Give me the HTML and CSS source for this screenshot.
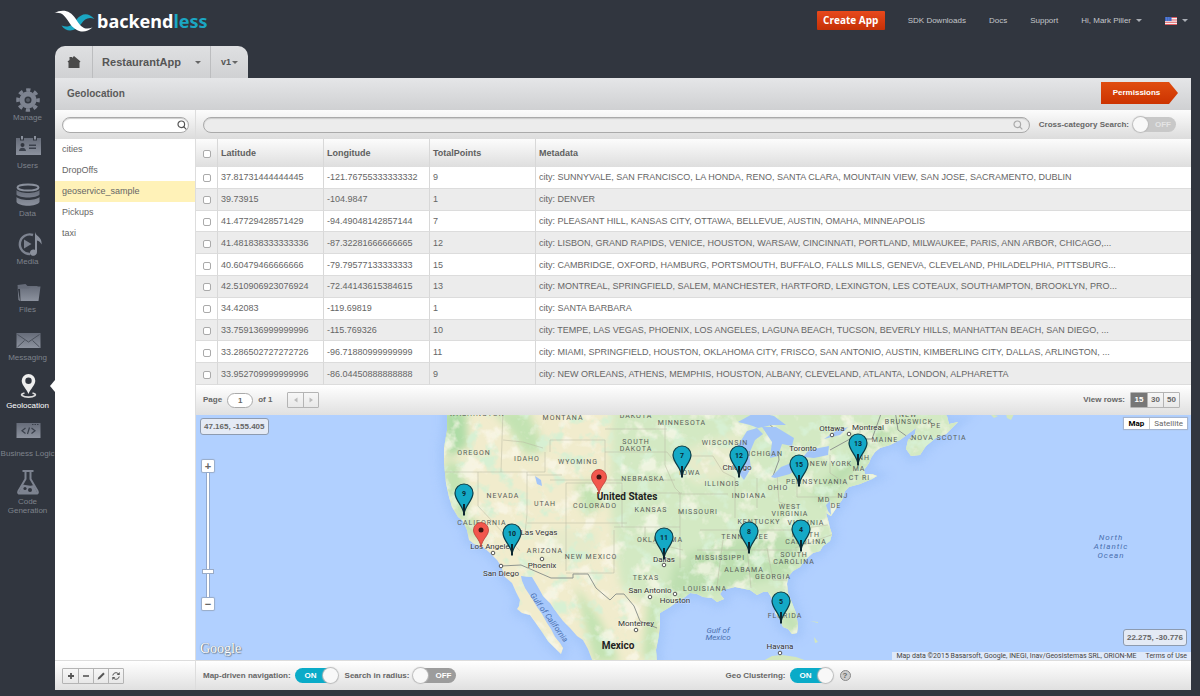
FILE: index.html
```html
<!DOCTYPE html>
<html lang="en">
<head>
<meta charset="utf-8">
<title>Backendless - Geolocation</title>
<link rel="stylesheet" href="styles.css">
</head>
<body>
<header class="topbar">
  <a class="logo" href="#" aria-label="backendless">
    <svg class="logo-mark" viewBox="0 0 40 22" aria-hidden="true">
      <path d="M7 15.500C14 18.500 18 15 22 9.500C27 3 34 2 40 9C34 6.500 30 9 27 13.500C21 22 12 23 7 15.500Z" fill="#1ba6c2"/>
      <path d="M0 3C8 -1.500 16 .5 21 8.500C26 17 30 20.500 38 17.500C30 24.500 21 22 15 13C10 5 7 2 0 3Z" fill="#fff"/>
    </svg>
    <span class="logo-text">backend<span class="logo-accent">less</span></span>
  </a>
  <nav class="topnav">
    <button class="create" type="button">Create App</button>
    <a href="#">SDK Downloads</a>
    <a href="#">Docs</a>
    <a href="#">Support</a>
    <button class="menu" type="button">Hi, Mark Piller <i class="caret"></i></button>
    <button class="menu flag" type="button" aria-label="Language">
      <svg width="12" height="8" viewBox="0 0 11 8" preserveAspectRatio="none" aria-hidden="true"><path fill="#f4f0f3" d="M0 0h11v8H0z"/><path stroke="#e05a5e" d="M0 .5h11M0 3h11M0 5.300h11M0 7.500h11"/><path fill="#3d66c4" d="M0 0h6v4H0z"/><path d="M1 1h4M1 3h4" stroke="#9db8ee" stroke-dasharray="1 1" stroke-width=".6"/></svg>
      <i class="caret"></i>
    </button>
  </nav>
</header>

<div class="layout">
  <nav class="side">
    <a href="#"><svg viewBox="0 0 30 30" aria-hidden="true"><g fill="none" stroke="#7d8390"><circle cx="15" cy="18" r="6" stroke-width="5"/><circle cx="15" cy="18" r="10" stroke-width="3.600" stroke-dasharray="4.200 3.654" stroke-dashoffset="2.100"/></g><circle cx="15" cy="18" r="2" fill="#555b66"/></svg>Manage</a>
    <a href="#"><svg viewBox="0 0 30 30" aria-hidden="true"><path fill="url(#ig)" d="M3 8h4v2.500h4V8h9v2.500h4V8h4v17H3z"/><path d="M9 6v3.500M22 6v3.500" stroke="#8a909c" stroke-width="2"/><circle cx="9.500" cy="15" r="2" fill="#31363f"/><path d="M6 21c0-4.500 7-4.500 7 0zM16 14.500h7V16h-7zM16 17.500h7V19h-7z" fill="#3b414c"/></svg>Users</a>
    <a href="#"><svg viewBox="0 0 30 30" aria-hidden="true"><ellipse cx="15" cy="9.500" rx="10.500" ry="3" fill="none" stroke="#8a909c" stroke-width="2"/><path fill="url(#ig)" d="M3.500 12c4 4 19 4 23 0v4.500c-3 4-20 4-23 0zM3.500 19c4 4 19 4 23 0v5c-3 5-20 5-23 0z"/></svg>Data</a>
    <a href="#"><svg viewBox="0 0 30 30" aria-hidden="true"><path d="M20 9A9.800 9.800 0 1 0 17 28" fill="none" stroke="#7d8390" stroke-width="2.400"/><path d="M11 13.500l7.500 4.500-7.500 4.500z" fill="#7d8390"/><path d="M22 6c1 4.500 7.500 5 6.500 12.500-1-2.500-2.500-3.500-4.500-4V26c0 5-7.500 5-7 .5.500-3 3-3.500 5-2.500z" fill="#8a909c"/></svg>Media</a>
    <a href="#"><svg viewBox="0 0 30 30" aria-hidden="true"><path fill="#656b78" d="M4.500 11l8-1 2 2h10v3H5z"/><path fill="url(#ig)" d="M7 14.500h9l2-2h9.500L25.500 27H7.500zM4.500 12l2.500 15-1.500-1z"/></svg>Files</a>
    <a href="#"><svg viewBox="0 0 30 30" aria-hidden="true"><path fill="url(#ig)" d="M3.500 11h24v15h-24z"/><path d="M4.500 12.500l11 7.500 11-7.500M4.500 25l7-6.500M26.500 25l-7-6.500" fill="none" stroke="#4b515c"/></svg>Messaging</a>
    <a href="#" class="active" aria-current="page"><svg viewBox="0 0 30 30" aria-hidden="true"><path fill="#eee" fill-rule="evenodd" d="M15.500 4a6.800 6.800 0 0 1 6.800 6.800c0 4.200-4.800 8.200-6.800 13.200-2-5-6.800-9-6.800-13.200A6.800 6.800 0 0 1 15.500 4zm0 3.600a3.200 3.200 0 1 0 0 6.400 3.200 3.200 0 0 0 0-6.400z"/><path d="M11.500 23c-6 1.500-1.500 4.200 4 4.200s10-2.700 4-4.200" fill="none" stroke="#ddd" stroke-width="1.800"/></svg>Geolocation</a>
    <a href="#"><svg viewBox="0 0 30 30" aria-hidden="true"><path fill="url(#ig)" d="M3.500 5h24v15h-24z"/><path d="M19 6.500h7" stroke="#3a404b" stroke-dasharray="1.500 1"/><path d="M12.500 10L9 12.800l3.500 2.700M18.500 10l3.500 2.800-3.500 2.700M16.500 9.500l-2 6.500" fill="none" stroke="#3a404b" stroke-width="1.200"/></svg>Business Logic</a>
    <a href="#"><svg viewBox="0 0 30 30" aria-hidden="true"><path d="M9.500 5h11M12.500 5v8l-7 12c-1 2 0 2.500 1.500 2.500h16c1.500 0 2.500-.5 1.500-2.500l-7-12V5" fill="none" stroke="#7d8390" stroke-width="2"/><path fill="#7d8390" d="M9.500 19c3-1 7 2 11 0l4 8h-19z"/><circle cx="12" cy="22.500" r="1.600" fill="#31363f"/><circle cx="17" cy="24" r="2" fill="#31363f"/></svg>Code Generation</a>
    <svg class="defs" aria-hidden="true"><defs><linearGradient id="ig" x2="0" y2="1"><stop stop-color="#666c79"/><stop offset="1" stop-color="#8c929e"/></linearGradient></defs></svg>
  </nav>

  <div class="workspace">
    <div class="tabs">
      <button class="tab home" type="button" aria-label="Home"><svg width="14" height="14" viewBox="0 0 14 14" aria-hidden="true"><path d="M7 1l6.500 5.500-1 1V13h-11V7.500l-1-1L2.500 5V2H5v1z" fill="#4a4a4a"/></svg></button>
      <button class="tab app" type="button">RestaurantApp <i class="caret dark"></i></button>
      <button class="tab version" type="button">v1<i class="caret dark"></i></button>
    </div>
    <div class="titlebar">
      <h1>Geolocation</h1>
      <button class="permissions" type="button"><span>Permissions</span></button>
    </div>
    <div class="panes">
      <aside class="cats">
        <div class="bar">
          <label class="search"><input type="text" aria-label="Filter categories"><svg viewBox="0 0 10 10" aria-hidden="true"><circle cx="4.300" cy="4.300" r="3.300"/><path d="M6.700 6.700L9.300 9.300"/></svg></label>
        </div>
        <ul>
          <li><a href="#">cities</a></li>
          <li><a href="#">DropOffs</a></li>
          <li class="current"><a href="#">geoservice_sample</a></li>
          <li><a href="#">Pickups</a></li>
          <li><a href="#">taxi</a></li>
        </ul>
        <div class="footbar">
          <div class="group">
            <button type="button" aria-label="Add"><svg viewBox="0 0 10 10" aria-hidden="true"><path d="M5 2v6M2 5h6" stroke-width="1.800"/></svg></button>
            <button type="button" aria-label="Remove"><svg viewBox="0 0 10 10" aria-hidden="true"><path d="M2 5h6" stroke-width="1.600"/></svg></button>
            <button type="button" aria-label="Edit"><svg viewBox="0 0 10 10" aria-hidden="true"><path d="M3 7.200L8 2.200" stroke-width="2"/><path d="M1.500 8.700l1-2.500 1.500 1.500z" fill="#555" stroke="none"/></svg></button>
            <button type="button" aria-label="Refresh"><svg viewBox="0 0 10 10" aria-hidden="true"><path d="M1.800 4.500a3.200 3.200 0 0 1 5.600-1.700M8.200 5.500a3.200 3.200 0 0 1-5.600 1.700"/><path d="M8.700 1v3h-3zM1.300 9V6h3z" fill="#555" stroke="none"/></svg></button>
          </div>
        </div>
      </aside>

      <main class="main">
        <div class="bar">
          <label class="search wide"><input type="text" aria-label="Search points"><svg viewBox="0 0 10 10" aria-hidden="true"><circle cx="4.300" cy="4.300" r="3.300"/><path d="M6.700 6.700L9.300 9.300"/></svg></label>
          <label class="switch faded">Cross-category Search: <input type="checkbox"><span class="track">OFF</span></label>
        </div>

        <table>
          <thead><tr><th class="c-check"><input type="checkbox" aria-label="Select all"></th><th class="c-num">Latitude</th><th class="c-num">Longitude</th><th class="c-num">TotalPoints</th><th>Metadata</th></tr></thead>
          <tbody>
            <tr><td><input type="checkbox" aria-label="Select row 1"></td><td>37.81731444444445</td><td>-121.76755333333332</td><td>9</td><td>city: SUNNYVALE, SAN FRANCISCO, LA HONDA, RENO, SANTA CLARA, MOUNTAIN VIEW, SAN JOSE, SACRAMENTO, DUBLIN</td></tr>
            <tr><td><input type="checkbox" aria-label="Select row 2"></td><td>39.73915</td><td>-104.9847</td><td>1</td><td>city: DENVER</td></tr>
            <tr><td><input type="checkbox" aria-label="Select row 3"></td><td>41.47729428571429</td><td>-94.49048142857144</td><td>7</td><td>city: PLEASANT HILL, KANSAS CITY, OTTAWA, BELLEVUE, AUSTIN, OMAHA, MINNEAPOLIS</td></tr>
            <tr><td><input type="checkbox" aria-label="Select row 4"></td><td>41.481838333333336</td><td>-87.32281666666665</td><td>12</td><td>city: LISBON, GRAND RAPIDS, VENICE, HOUSTON, WARSAW, CINCINNATI, PORTLAND, MILWAUKEE, PARIS, ANN ARBOR, CHICAGO,...</td></tr>
            <tr><td><input type="checkbox" aria-label="Select row 5"></td><td>40.60479466666666</td><td>-79.79577133333333</td><td>15</td><td>city: CAMBRIDGE, OXFORD, HAMBURG, PORTSMOUTH, BUFFALO, FALLS MILLS, GENEVA, CLEVELAND, PHILADELPHIA, PITTSBURG...</td></tr>
            <tr><td><input type="checkbox" aria-label="Select row 6"></td><td>42.510906923076924</td><td>-72.44143615384615</td><td>13</td><td>city: MONTREAL, SPRINGFIELD, SALEM, MANCHESTER, HARTFORD, LEXINGTON, LES COTEAUX, SOUTHAMPTON, BROOKLYN, PRO...</td></tr>
            <tr><td><input type="checkbox" aria-label="Select row 7"></td><td>34.42083</td><td>-119.69819</td><td>1</td><td>city: SANTA BARBARA</td></tr>
            <tr><td><input type="checkbox" aria-label="Select row 8"></td><td>33.759136999999996</td><td>-115.769326</td><td>10</td><td>city: TEMPE, LAS VEGAS, PHOENIX, LOS ANGELES, LAGUNA BEACH, TUCSON, BEVERLY HILLS, MANHATTAN BEACH, SAN DIEGO, ...</td></tr>
            <tr><td><input type="checkbox" aria-label="Select row 9"></td><td>33.286502727272726</td><td>-96.71880999999999</td><td>11</td><td>city: MIAMI, SPRINGFIELD, HOUSTON, OKLAHOMA CITY, FRISCO, SAN ANTONIO, AUSTIN, KIMBERLING CITY, DALLAS, ARLINGTON, ...</td></tr>
            <tr><td><input type="checkbox" aria-label="Select row 10"></td><td>33.952709999999996</td><td>-86.04450888888888</td><td>9</td><td>city: NEW ORLEANS, ATHENS, MEMPHIS, HOUSTON, ALBANY, CLEVELAND, ATLANTA, LONDON, ALPHARETTA</td></tr>
          </tbody>
        </table>

        <div class="pager">
          <label class="page">Page <input type="text" value="1"></label>
          <span>of 1</span>
          <div class="group off">
            <button type="button" disabled aria-label="Previous page"><svg viewBox="0 0 10 10" aria-hidden="true"><path d="M6.500 2.500v5L3 5z"/></svg></button>
            <button type="button" disabled aria-label="Next page"><svg viewBox="0 0 10 10" aria-hidden="true"><path d="M3.500 2.500v5L7 5z"/></svg></button>
          </div>
          <span class="push">View rows:</span>
          <div class="group rows">
            <button type="button" class="on" aria-pressed="true">15</button>
            <button type="button">30</button>
            <button type="button">50</button>
          </div>
        </div>

        <section class="map" aria-label="Map">
          <svg class="canvas" viewBox="196 415 995 245" preserveAspectRatio="xMidYMid slice">
            <defs>
              <filter id="soft" x="-30%" y="-30%" width="160%" height="160%"><feGaussianBlur stdDeviation="4"/></filter>
              <filter id="mottle" x="0" y="0" width="100%" height="100%"><feTurbulence type="fractalNoise" baseFrequency=".06" numOctaves="4" seed="7"/><feColorMatrix values="0 0 0 0 .68  0 0 0 0 .87  0 0 0 0 .65  5 0 0 0 -2.700"/></filter>
              <filter id="sand" x="0" y="0" width="100%" height="100%"><feTurbulence type="fractalNoise" baseFrequency=".05" numOctaves="4" seed="21"/><feColorMatrix values="0 0 0 0 .96  0 0 0 0 .94  0 0 0 0 .83  5 0 0 0 -2.700"/></filter>
              <path id="land" d="M447 410L447 430 444 448 444 463 446 483 449 497 452 507 458 517 463 521 467 530 469 540 474 544 483 547 490 553 497 560 501 566 505 577 512 583 516 592 520 600 519 606 517 609 522 613 530 615 535 622 542 632 548 641 555 648 561 654 563 648 560 643 555 637 551 629 547 623 542 614 537 607 531 597 525 588 522 581 521 576 532 577 535 582 538 587 543 596 550 603 557 613 563 621 570 628 577 636 583 640 588 649 593 662 657 662 656 650 658 640 660 627 660 613 670 607 678 601 685 597 690 593 697 594 703 597 712 598 717 602 724 599 720 594 723 590 735 587 750 590 757 595 763 592 768 592 773 600 776 606 775 613 780 620 783 627 788 629 792 634 797 633 798 625 796 613 792 603 788 593 787 584 788 577 793 571 800 567 806 559 813 553 820 551 823 546 830 541 832 534 830 528 828 520 826 513 831 516 837 507 842 500 845 491 849 487 860 484 872 479 877 476 872 474 865 474 864 470 869 463 871 458 875 452 880 448 890 445 900 440 908 434 916 428 915 434 908 440 906 449 911 456 920 455 926 446 937 437 946 434 958 422 949 424 947 416 940 410Z"/>
              <clipPath id="inland"><use href="#land"/></clipPath>
              <g id="cluster"><path d="M0 22C0 13-9 8-9 0a9 9 0 0 1 18 0C9 8 0 13 0 22z" fill="#14a9c6" stroke="#0a3c48" stroke-width="1.200"/><path d="M0 11v11.500" stroke="#0c2630" stroke-width="2"/></g>
              <g id="point"><path d="M0 17C-1 9-7.500 6-7.500 0a7.500 7.500 0 0 1 15 0C7.500 6 1 9 0 17z" fill="#f2574d" stroke="#b63e36" stroke-width=".8"/><circle r="2.500" fill="#401412"/></g>
            </defs>
            <path fill="#b1d0ff" d="M-2000 415h6000v245H-2000z"/>
            <use href="#land" fill="#8fb6f2" stroke="#a3c5fa" stroke-width="12" filter="url(#soft)" opacity=".8"/>
            <use href="#land" fill="#f1eccd"/>
            <g clip-path="url(#inland)">
              <g filter="url(#soft)">
                <path fill="#d3e9c3" d="M612 405h353v240H700l-80-60-10-80z"/>
                <path fill="#aedca6" d="M440 410h26l2 36-20 12z"/>
                <path fill="#c3e3b2" d="M445 460l18 5 5 45 18 30-20-5-24-50zM492 410h36l18 40-20 5-20-30zM575 485l20-5 8 22-16 16zM575 585l25 35 20 42h-26zM648 600l12 8-4 50h-14z"/>
                <path fill="#bddfb0" d="M685 555l80-25 40 10-15 35-100 20zM770 595l30 30-6 8-16-20zM810 495l20-20 50-50h16l-26 30-45 50zM675 560l20 20-10 15-20 5z"/>
                <path fill="#e6ebcb" d="M670 455l70-25 15 40-60 15zM540 530h60l-10 30-50 5z"/>
              </g>
              <path fill="#fff" filter="url(#mottle)" d="M440 410h530v255H440z"/>
              <path fill="#fff" filter="url(#sand)" opacity=".7" d="M440 410h530v255H440z"/>
              <path class="border" d="M440 472h105v-20M503 410l-2 62M503 440l20 2 20 6M478 472v34l42 45M527 472v42l-2 20M527 523h100M550 452v-12h55v40h-55M566 483h56v44M566 483v88M527 475h35M605 429h62M605 452h62l10 13M605 480h70M622 493h60M614 527h66M614 530v43h-48M645 527v14l38 9M665 425v40l10 23 5 5v75M683 456h30l10 16 12 6M678 494h50M700 530h90l38-5M697 550h100M723 540l-6 46M747 548l4 40M767 548l6 32h14M735 478v40M757 478v30M777 474l2 28 18 6M797 470v27h45M830 455v18l18 12M860 425v30M845 530l-50 18"/>
              <path class="country" d="M501 566l20-1 30 13h22v-4h15l8 14 14 12 6-6h8l10 12 6 15 17 7M750 410l12 8 14 12 3 30-6 16 25-10M830 450l20-11h22l10-28M895 410l3 20 14 10"/>
              <g class="lake">
                <path d="M738 422l18-10 18 4 12 9-14 0-14 3-8-3z"/>
                <path d="M757 428l-10 3-10 16 1 25 6 8 7-12-2-14 6-14 8-6z"/>
                <path d="M762 427l14 0 18 11-2 8-10-2-4 12-8 2 2-16z"/>
                <path d="M771 477l10-10 18-7 6 2-15 12-15 4z"/>
                <path d="M803 457l6-7 20-4-1 9-14 3z"/>
                <path d="M535 476l6 4 1 6-5-2z"/><path d="M848 427l-8 8-16 4 12-8zM826 505l4-4 1 14-3-4z"/>
              </g>
            </g>
            <path fill="#d3e7bd" d="M763 661l9-5 10-1 14 2 14 5zM810 621l8 1v1zM814 637l4 5-3 1zM990 414l8 2-4 2zM1006 414h8l-3 6-4-2z"/>
            <g class="state">
              <text x="477" y="416">WASHINGTON</text><text x="563" y="420">MONTANA</text><text x="636" y="418">DAKOTA</text><text x="682" y="425">MINNESOTA</text>
              <text x="474" y="455">OREGON</text><text x="527" y="461">IDAHO</text><text x="578" y="464">WYOMING</text><text x="636" y="444">SOUTH</text><text x="636" y="451">DAKOTA</text>
              <text x="643" y="481">NEBRASKA</text><text x="503" y="498">NEVADA</text><text x="545" y="506">UTAH</text><text x="595" y="508">COLORADO</text><text x="651" y="512">KANSAS</text><text x="698" y="514">MISSOURI</text>
              <text x="482" y="525">CALIFORNIA</text><text x="545" y="553">ARIZONA</text><text x="591" y="559">NEW MEXICO</text><text x="660" y="542">OKLAHOMA</text><text x="646" y="580">TEXAS</text><text x="690" y="475">IOWA</text>
              <text x="725" y="445">WISCONSIN</text><text x="762" y="456">MICHIGAN</text><text x="722" y="486">ILLINOIS</text><text x="749" y="498">INDIANA</text><text x="778" y="490">OHIO</text><text x="817" y="484">PENNSYLVANIA</text><text x="831" y="466">NEW YORK</text>
              <text x="790" y="509">WEST</text><text x="790" y="516">VIRGINIA</text><text x="759" y="524">KENTUCKY</text><text x="806" y="525">VIRGINIA</text><text x="745" y="539">TENNESSEE</text><text x="806" y="537">NORTH</text><text x="806" y="544">CAROLINA</text>
              <text x="794" y="557">SOUTH</text><text x="794" y="564">CAROLINA</text><text x="720" y="560">MISSISSIPPI</text><text x="744" y="572">ALABAMA</text><text x="773" y="579">GEORGIA</text><text x="705" y="591">LOUISIANA</text><text x="785" y="618">FLORIDA</text>
              <text x="824" y="502">MD</text><text x="836" y="508">DE</text><text x="843" y="498">NJ</text><text x="854" y="480">CT</text><text x="866" y="480">RI</text><text x="859" y="471">MA</text><text x="864" y="460">NH</text><text x="885" y="442">MAINE</text>
              <text x="908" y="417">NEW</text><text x="909" y="424">BRUNSWICK</text><text x="936" y="428">PE</text><text x="939" y="440">NOVA SCOTIA</text>
            </g>
            <g class="city">
              <text x="492" y="549">Los Angeles</text><text x="501" y="576">San Diego</text><text x="539" y="535">Las Vegas</text><text x="542" y="568">Phoenix</text><text x="664" y="562">Dallas</text><text x="650" y="593">San Antonio</text><text x="675" y="603">Houston</text><text x="636" y="626">Monterrey</text><text x="780" y="649">Havana</text><text x="737" y="470">Chicago</text><text x="803" y="451">Toronto</text><text x="832" y="431">Ottawa</text><text x="868" y="430">Montreal</text>
            </g>
            <g class="dot"><circle cx="493" cy="553" r="1.800"/><circle cx="501" cy="566" r="1.800"/><circle cx="542" cy="559" r="1.800"/><circle cx="664" cy="565" r="1.800"/><circle cx="650" cy="597" r="1.800"/><circle cx="675" cy="594" r="1.800"/><circle cx="636" cy="630" r="1.800"/><circle cx="780" cy="653" r="1.800"/><circle cx="832" cy="435" r="1.800"/><circle cx="849" cy="434" r="1.800"/></g>
            <g class="nation"><text x="627" y="500">United States</text><text x="618" y="649">Mexico</text></g>
            <g class="water"><text x="718" y="633">Gulf of</text><text x="718" y="640">Mexico</text><text x="547" y="619" transform="rotate(54 547 619)">Gulf of California</text>
              <g class="ocean"><text x="1111" y="540">North</text><text x="1111" y="549">Atlantic</text><text x="1111" y="558">Ocean</text></g></g>
            <g class="pins">
              <use href="#point" x="599" y="477"/><use href="#point" x="481" y="530"/>
              <use href="#cluster" x="858" y="443"/><text x="858" y="446">13</text>
              <use href="#cluster" x="682" y="455"/><text x="682" y="458">7</text>
              <use href="#cluster" x="739" y="455"/><text x="739" y="458">12</text>
              <use href="#cluster" x="799" y="464"/><text x="799" y="467">15</text>
              <use href="#cluster" x="464" y="493"/><text x="464" y="496">9</text>
              <use href="#cluster" x="512" y="533"/><text x="512" y="536">10</text>
              <use href="#cluster" x="664" y="537"/><text x="664" y="540">11</text>
              <use href="#cluster" x="749" y="531"/><text x="749" y="534">8</text>
              <use href="#cluster" x="801" y="529"/><text x="801" y="532">4</text>
              <use href="#cluster" x="781" y="601"/><text x="781" y="604">5</text>
            </g>
          </svg>
          <div class="coords nw">47.165, -155.405</div>
          <div class="coords se">22.275, -30.776</div>
          <div class="zoom">
            <button type="button" aria-label="Zoom in">+</button>
            <div class="rail"><i class="thumb"></i></div>
            <button type="button" aria-label="Zoom out">−</button>
          </div>
          <div class="types"><button type="button" class="sel">Map</button><button type="button">Satellite</button></div>
          <div class="google">Google</div>
          <div class="credit"><span>Map data ©2015 Basarsoft, Google, INEGI, Inav/Geosistemas SRL, ORION-ME</span><a href="#">Terms of Use</a></div>
        </section>

        <div class="footbar">
          <label class="switch">Map-driven navigation: <input type="checkbox" checked><span class="track">ON</span></label>
          <label class="switch">Search in radius: <input type="checkbox"><span class="track">OFF</span></label>
          <label class="switch geo">Geo Clustering: <input type="checkbox" checked><span class="track">ON</span></label>
          <button class="help" type="button" aria-label="Help">?</button>
        </div>
      </main>
    </div>
  </div>
</div>
</body>
</html>
```

FILE: styles.css
```css
* { box-sizing: border-box; }

body {
  margin: 0;
  min-height: 100vh;
  display: flex;
  flex-direction: column;
  background: #31363f;
  color: #666;
  font: 8px/12px "Liberation Sans", Arial, sans-serif;
}

button { margin: 0; padding: 0; border: 0; background: none; color: inherit; font: inherit; cursor: pointer; }
input { margin: 0; font: inherit; color: inherit; }
a { color: inherit; text-decoration: none; }
svg { display: block; }

.caret { display: inline-block; border: 3px solid transparent; border-top-color: #aaaeb5; border-bottom: 0; }
.caret.dark { border-top-color: #666; }

/* Top bar */
.topbar { display: flex; align-items: flex-start; justify-content: space-between; height: 46px; padding: 0 12px 0 54px; }
.logo { display: flex; align-items: center; gap: 2px; margin-top: 10px; height: 22px; }
.logo-mark { width: 41px; height: 22px; }
.logo-text { color: #fff; font: bold 18px/22px "Noto Sans", sans-serif; }
.logo-accent { color: #1ba6c2; }
.topnav { display: flex; align-items: center; gap: 23px; margin-top: 11px; color: #c4c7cb; }
.create { width: 68px; height: 19px; border-radius: 1px; background: linear-gradient(#e8491c, #c43006); color: #fff; font: bold 10px/19px "Open Sans", sans-serif; }
.menu { display: flex; align-items: center; gap: 5px; }

.layout { flex: 1; display: flex; }

/* Module navigation */
.side { width: 55px; padding-top: 36px; color: #7e838c; line-height: 9px; text-align: center; }
.side a { position: relative; display: flex; flex-direction: column; align-items: center; gap: 1px; height: 48px; white-space: nowrap; }
.side a:last-of-type { white-space: normal; }
.side a svg { width: 30px; height: 30px; flex: none; }
.side .active { color: #fff; }
.side .active::after { content: ""; position: absolute; right: 0; top: 10px; border: 6px solid transparent; border-right: 5px solid #fff; border-left: 0; }
.defs { width: 0; height: 0; }

.workspace { flex: 1; min-width: 0; display: flex; flex-direction: column; margin: 0 9px 6px 0; }

/* Application tabs */
.tabs { display: flex; align-self: flex-start; height: 32px; border-radius: 10px 10px 0 0; overflow: hidden; background: linear-gradient(#dfe0e2, #d0d1d3); color: #555; font-weight: bold; }
.tab { display: flex; align-items: center; justify-content: center; }
.tab + .tab { border-left: 1px solid #bcbdbf; }
.home { width: 37px; }
.app { width: 118px; gap: 14px; font-size: 11px; }
.version { width: 38px; gap: 1px; font-size: 9px; }

.titlebar { display: flex; align-items: center; justify-content: space-between; height: 32px; padding: 0 13px 0 12px; background: linear-gradient(#e5e6e8, #cfd0d2); }
h1 { margin: 0; color: #5a5a5a; font-size: 10px; }
.permissions { align-self: flex-start; width: 77px; height: 22px; margin-top: 4px; padding-right: 6px; background: linear-gradient(#e04d10, #cc3300); clip-path: polygon(0 0, 68px 0, 100% 50%, 68px 100%, 0 100%); color: #fff; font-weight: bold; }

.panes { flex: 1; display: flex; background: #fff; }
.bar, .footbar, .pager { display: flex; align-items: center; background: linear-gradient(#fff, #e0e0e0); font-weight: bold; }
.bar { height: 29px; padding: 0 7px; background: linear-gradient(#fcfcfc, #dcdcdc); }
.footbar { height: 30px; padding: 0 7px; border-top: 1px solid #ddd; }

.search { flex: 1; position: relative; display: block; }
.search input { display: block; width: 100%; height: 16px; padding: 0 18px 0 8px; border: 1px solid #aaa; border-radius: 8px; background: #fff; box-shadow: inset 0 1px 1px #ccc; }
.search svg { position: absolute; right: 2px; top: 3px; width: 10px; height: 10px; fill: none; stroke: #555; stroke-width: 1.2; }
.search.wide input { background: #ececec; }
.search.wide svg { right: 7px; stroke: #aaa; }

/* Category list */
.cats { display: flex; flex-direction: column; width: 141px; border-right: 1px solid #ddd; }
.cats .bar { padding-right: 6px; }
.cats ul { flex: 1; margin: 0; padding: 0; list-style: none; font-size: 9px; line-height: 21px; }
.cats li { padding-left: 7px; }
.cats .current { background: #fff2b8; }

.group { display: flex; border: 1px solid #b4b4b4; border-radius: 1px; }
.group button { display: flex; align-items: center; justify-content: center; width: 15px; height: 14px; }
.group button + button { border-left: 1px solid #b4b4b4; }
.group svg { width: 10px; height: 10px; fill: none; stroke: #555; }
.group.off svg { fill: #bbb; stroke: none; }
.rows button { width: 16px; }
.rows .on { background: #777; color: #fff; }

.main { flex: 1; min-width: 0; display: flex; flex-direction: column; }
.main .bar { gap: 9px; padding-right: 15px; }

/* Switches */
.switch { display: flex; align-items: center; gap: 4px; white-space: nowrap; }
.switch input { position: absolute; opacity: 0; pointer-events: none; }
.track { position: relative; width: 43px; height: 15px; padding-left: 17px; border-radius: 8px; background: #9c9c9c; color: #fff; line-height: 16px; text-align: center; }
.track::after { content: ""; position: absolute; left: 0; top: 0; width: 15px; height: 15px; border-radius: 50%; background: #f8f8f8; box-shadow: 0 0 1px 1px #b9b9b9; }
.switch input:checked + .track { padding: 0 11px 0 0; background: #0aabc8; }
.switch input:checked + .track::after { left: auto; right: 0; }
.switch input:focus-visible + .track { outline: 1px solid #0aabc8; }
.faded .track { background: #c8c8c8; color: #e4e4e4; }

/* Points table */
table { width: 100%; height: 246px; border-collapse: separate; border-spacing: 0; table-layout: fixed; font-size: 9px; line-height: 12px; }
th, td { padding: 0 3px; border-right: 1px solid #d8d8d8; text-align: left; white-space: nowrap; overflow: hidden; text-overflow: ellipsis; }
th:last-child, td:last-child { border-right: 0; }
th { height: 28px; background: linear-gradient(#fcfcfc, #dedede); color: #5f5f5f; }
td { border-bottom: 1px solid #dcdcdc; }
tbody tr:nth-child(even) { background: #ececec; }
.c-check { width: 22px; }
.c-num { width: 106px; }
table input { display: block; appearance: none; width: 8px; height: 8px; margin: 2px auto 0; border: 1px solid #aaa; border-radius: 2px; background: #fff; }
table input:checked { background: #0aabc8; }

.pager { gap: 5px; height: 30px; padding: 0 11px 0 7px; }
.page { display: flex; align-items: center; gap: 5px; }
.page input { width: 26px; height: 15px; padding: 0; border: 1px solid #aaa; border-radius: 8px; background: #fff; text-align: center; font-weight: bold; }
.off { margin-left: 10px; }
.push { margin-left: auto; }

/* Map */
.map { position: relative; flex: 1; min-height: 245px; overflow: hidden; background: #b1d0ff; }
.canvas { position: absolute; inset: 0; width: 100%; height: 100%; }
.canvas text { font-family: Roboto, sans-serif; text-anchor: middle; }
.border { fill: none; stroke: #b9b9a4; stroke-width: 1; opacity: .5; }
.country { fill: none; stroke: #8f958f; stroke-width: 1; }
.lake { fill: #a3c5f8; }
.state { fill: #5a605a; font-size: 7px; letter-spacing: 1px; }
.city { fill: #333; font-size: 8px; stroke: #fff; stroke-opacity: .4; stroke-width: 1px; paint-order: stroke; }
.dot { fill: #fff; stroke: #555; }
.nation { fill: #222; font-size: 10px; font-weight: bold; }
.water { fill: #4a6fae; font-size: 8px; font-style: italic; }
.ocean { letter-spacing: 1px; }
.pins text { fill: #0a2a34; font-size: 7px; font-weight: bold; }

.coords { position: absolute; padding: 0 3px; border: 1px solid #8d9bb0; border-radius: 3px; background: #e4eaf5; font-weight: bold; line-height: 15px; }
.coords.nw { left: 4px; top: 3px; }
.coords.se { right: 4px; bottom: 14px; }
.zoom { position: absolute; left: 6px; top: 45px; display: flex; flex-direction: column; align-items: center; width: 12px; }
.zoom button { width: 12px; height: 12px; border-radius: 1px; background: #fff; box-shadow: 0 0 1px 1px #9aabc6; font: bold 11px/12px "Liberation Sans", sans-serif; }
.rail { position: relative; width: 4px; height: 126px; border: 1px solid #94a9cc; background: #fff; }
.thumb { position: absolute; left: -5px; top: 96px; width: 12px; height: 5px; border: 1px solid #9aabc6; background: #fff; }
.types { position: absolute; right: 4px; top: 3px; display: flex; background: #fff; box-shadow: 0 0 1px 1px #a5b5d0; font: 8px/11px Roboto, sans-serif; }
.types button { padding: 0 5px; }
.types button + button { border-left: 1px solid #ccc; padding: 0 4px; }
.types .sel { color: #000; font-weight: bold; }
.google { position: absolute; left: 4px; bottom: 3px; color: #fff; font: 14px/16px "Liberation Serif", serif; text-shadow: 0 0 1px #567, 1px 1px 1px #789; }
.credit { position: absolute; right: 0; bottom: 0; display: flex; gap: 9px; padding: 0 4px; background: #dfe9fa; color: #444; font: 7px/8px Roboto, sans-serif; }

.main .footbar { gap: 7px; }
.geo { margin-left: 262px; }
.help { width: 11px; height: 11px; border: 1px solid #888; border-radius: 50%; background: #ccc; font-weight: bold; line-height: 9px; }
```
